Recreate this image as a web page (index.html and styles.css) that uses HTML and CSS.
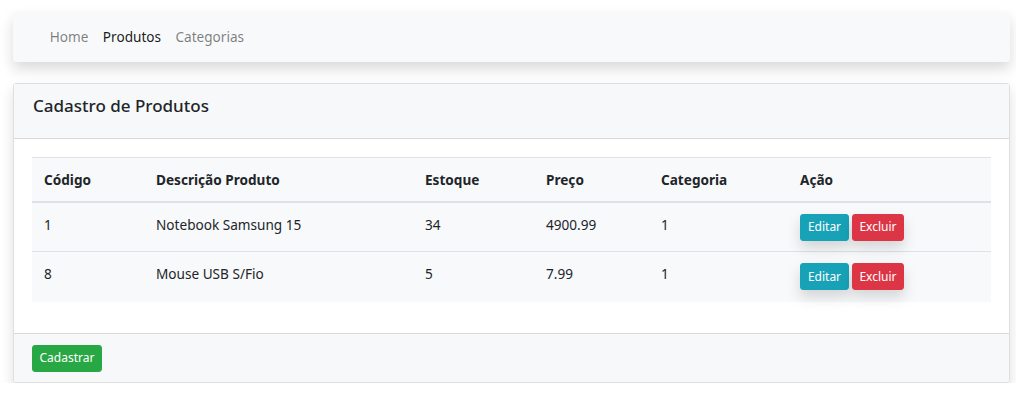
FILE: index.html
```html
<!DOCTYPE html>
<html lang="pt-BR">
<head>
<meta charset="utf-8">
<title>Cadastro de Produtos</title>
<link rel="stylesheet" href="styles.css">
</head>
<body>
<div class="page">
  <nav class="navbar">
    <ul class="nav">
      <li><a class="nav-link" href="#">Home</a></li>
      <li><a class="nav-link active" href="#">Produtos</a></li>
      <li><a class="nav-link" href="#">Categorias</a></li>
    </ul>
  </nav>

  <div class="card">
    <div class="card-header">
      <h5 class="card-title">Cadastro de Produtos</h5>
    </div>
    <div class="card-body">
      <table class="table">
        <colgroup>
          <col class="c1"><col class="c2"><col class="c3"><col class="c4"><col class="c5"><col class="c6">
        </colgroup>
        <thead>
          <tr>
            <th>Código</th>
            <th>Descrição Produto</th>
            <th>Estoque</th>
            <th>Preço</th>
            <th>Categoria</th>
            <th>Ação</th>
          </tr>
        </thead>
        <tbody>
          <tr>
            <td>1</td>
            <td>Notebook Samsung 15</td>
            <td>34</td>
            <td>4900.99</td>
            <td>1</td>
            <td class="actions"><button class="btn btn-info">Editar</button><button class="btn btn-danger">Excluir</button></td>
          </tr>
          <tr>
            <td>8</td>
            <td>Mouse USB S/Fio</td>
            <td>5</td>
            <td>7.99</td>
            <td>1</td>
            <td class="actions"><button class="btn btn-info">Editar</button><button class="btn btn-danger">Excluir</button></td>
          </tr>
        </tbody>
      </table>
    </div>
    <div class="card-footer">
      <button class="btn btn-success">Cadastrar</button>
    </div>
  </div>
</div>
</body>
</html>
```

FILE: styles.css
```css
* { box-sizing: border-box; }

html, body {
  margin: 0;
  padding: 0;
  background: #fff;
}

body {
  font-family: "Noto Sans", "Open Sans", sans-serif;
  font-size: 13.6px;
  line-height: 1.5;
  color: #212529;
}

.page {
  padding: 12px 6px 0 13px;
}

.navbar {
  height: 50px;
  background: #f8f9fa;
  border-radius: 3.6px;
  box-shadow: 0 7px 14px rgba(0, 0, 0, 0.15);
  display: flex;
  align-items: center;
  padding: 0 29.6px;
}

.nav {
  list-style: none;
  margin: 0;
  padding: 0;
  display: flex;
}

.nav-link {
  display: block;
  padding: 7.2px 7.2px;
  color: rgba(0, 0, 0, 0.5);
  text-decoration: none;
}

.nav-link.active {
  color: rgba(0, 0, 0, 0.9);
}

.card {
  margin-top: 21px;
  background: #fff;
  border: 1px solid rgba(0, 0, 0, 0.125);
  border-radius: 3.6px;
  box-shadow: 0 7px 14px rgba(0, 0, 0, 0.13);
}

.card-header {
  height: 55px;
  padding: 0 18px;
  background: #f7f8f9;
  border-bottom: 1px solid rgba(0, 0, 0, 0.125);
  display: flex;
  align-items: center;
}

.card-title {
  margin: 0 0 9px 1px;
  font-size: 17px;
  font-weight: 500;
  line-height: 1.2;
}

.card-body {
  padding: 18px 18px 17px;
}

.table {
  width: 100%;
  border-collapse: collapse;
  table-layout: fixed;
  background: #f8f9fa;
  margin-bottom: 14.4px;
}

.c1 { width: 112px; }
.c2 { width: 269px; }
.c3 { width: 121px; }
.c4 { width: 115px; }
.c5 { width: 139px; }
.c6 { width: auto; }

.table th,
.table td {
  text-align: left;
  padding: 10px 12px;
  line-height: 21px;
  border-top: 1px solid #dee2e6;
}

.table th {
  vertical-align: middle;
  font-weight: 700;
  border-bottom: 2px solid #dee2e6;
  height: 44px;
}

.table td {
  vertical-align: top;
  height: 50px;
  padding-top: 11px;
}

.table td.actions {
  padding-top: 11px;
  padding-bottom: 10px;
}

.btn {
  display: inline-block;
  font-family: inherit;
  font-size: 12px;
  line-height: 18.9px;
  height: 27px;
  padding: 3.6px 4px;
  border: 1px solid transparent;
  border-radius: 2.9px;
  color: #fff;
  cursor: pointer;
  vertical-align: top;
  text-align: center;
}

.actions .btn {
  box-shadow: 0 7px 14px rgba(0, 0, 0, 0.15);
}

.actions .btn + .btn {
  margin-left: 3px;
}

.btn-info {
  background: #17a2b8;
  border-color: #17a2b8;
  width: 49px;
}

.btn-danger {
  background: #dc3545;
  border-color: #dc3545;
  width: 52px;
}

.btn-success {
  background: #28a745;
  border-color: #28a745;
  width: 70px;
}

.card-footer {
  padding: 10.8px 18px 10px;
  background: #f7f8f9;
  border-top: 1px solid rgba(0, 0, 0, 0.125);
}
```
